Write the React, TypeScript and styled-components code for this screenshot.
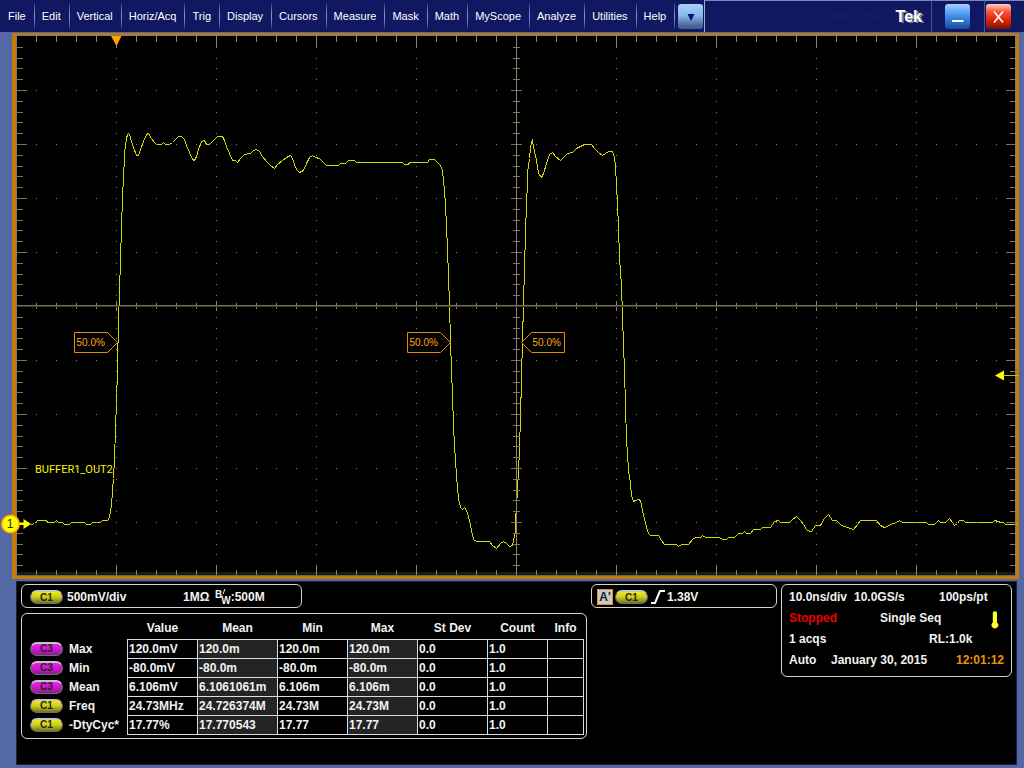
import React from "react";
import styled, { createGlobalStyle, css } from "styled-components";

const GlobalStyle = createGlobalStyle`
  *, *::before, *::after { box-sizing: border-box; }
  body {
    margin: 0;
    background: #5468a6;
    font-family: "Liberation Sans", Arial, sans-serif;
    font-size: 12px;
    line-height: 14px;
    color: #f2f2f2;
  }
  button { font: inherit; color: inherit; margin: 0; cursor: pointer; }
`;

const Page = styled.div`
  min-height: 100vh;
  display: flex;
  flex-direction: column;
`;

/* ---------- menu bar ---------- */

const MenuBar = styled.header`
  display: flex;
  height: 32px;
  background: #101862;
`;

const Menus = styled.nav`
  display: flex;
  align-items: stretch;
  padding: 3px 0 3px 1px;
`;

const MenuButton = styled.button`
  padding: 0 8px 0 7px;
  border: 0;
  border-right: 1px solid;
  border-image: linear-gradient(#2a3880, #7f9cd0, #2a3880) 1;
  background: none;
  color: #fff;
  font-size: 11px;
  line-height: 14px;
`;

const tones = {
  sky: "linear-gradient(#a9cdf8 0%, #88b8f0 45%, #4a6a98 85%, #3f5c88 100%)",
  blue: "linear-gradient(#a8d0ff 0%, #5aa0f4 35%, #3480e0 60%, #1c4a94 100%)",
  red: "linear-gradient(#ffd0c4 0%, #f8583c 30%, #e82808 60%, #781404 100%)",
};

const SquareButton = styled.button<{ $tone: keyof typeof tones }>`
  display: flex;
  align-items: center;
  justify-content: center;
  flex: none;
  width: 25px;
  height: 25px;
  padding: 0;
  border: 0;
  border-radius: 3px;
  background: ${(p) => tones[p.$tone]};
`;

const DropHolder = styled.div`
  padding: 4px 1px 0 3px;
`;

const TitleArea = styled.div`
  flex: 1;
  display: flex;
  justify-content: flex-end;
  align-items: stretch;
  border-top: 1px solid #7c86b4;
  border-left: 1px solid #a4acd0;
`;

const Model = styled.span`
  align-self: center;
  margin-right: 15px;
  color: #18225c;
`;

const Brand = styled.strong`
  align-self: center;
  margin-right: 9px;
  font-size: 16px;
  line-height: 20px;
  color: #fff;
  text-shadow: 2px 1px 0 #84848c;
`;

const WindowSlot = styled.div<{ $wide?: boolean }>`
  display: flex;
  border-left: 1px solid #46528c;
  padding: ${(p) => (p.$wide ? "3px 14px 0 13px" : "3px 13px 0 1px")};
`;

/* ---------- graticule ---------- */

const ScopeFrame = styled.main`
  margin: 1px 5px 0 12px;
  border: 3px solid #c47a08;
  border-left-width: 4px;
  background: #000;
`;

const Graticule = styled.svg`
  display: block;
  width: 100%;
  height: auto;
  overflow: visible;
`;

/* ---------- readouts ---------- */

const Readouts = styled.section`
  flex: 1;
  display: grid;
  grid-template-columns: minmax(0, 566fr) minmax(0, 186fr) minmax(0, 231fr);
  align-items: start;
  gap: 4px;
  margin: 2px 7px 3px 16px;
  padding: 2px 4px;
  border: 1px solid #1c2444;
  background: #000;
  font-weight: bold;
`;

const Column = styled.div`
  display: flex;
  flex-direction: column;
  gap: 5px;
`;

const card = css`
  border: 1px solid #d4d4d4;
  border-radius: 6px;
`;

const StripCard = styled.div<{ $half?: boolean }>`
  ${card}
  display: flex;
  align-items: center;
  height: 24px;
  padding: 2px 8px 0 ${(p) => (p.$half ? "8px" : "5px")};
  width: ${(p) => (p.$half ? "281px" : "auto")};
  max-width: 100%;
  white-space: nowrap;
`;

const Badge = styled.span<{ $kind: "C1" | "C3" }>`
  display: inline-flex;
  flex: none;
  align-items: center;
  justify-content: center;
  width: 33px;
  height: 14px;
  border: 1px solid #6c6c6c;
  border-top: 2px solid #c4c4c0;
  border-radius: 8px;
  background: ${(p) =>
    p.$kind === "C1"
      ? "linear-gradient(#eeee10, #cccc20 45%, #74741c)"
      : "linear-gradient(#f41cf4, #d018d0 45%, #8c1c8c)"};
  color: #242420;
  font-size: 10px;
  line-height: 10px;
  font-weight: bold;
`;

const Scale = styled.span`
  flex: 0 0 116px;
  margin-left: 4px;
`;

const Impedance = styled.span`
  flex: 0 0 32px;
`;

const Bandwidth = styled.span`
  display: flex;
  align-items: flex-start;
  height: 16px;
  font-size: 10px;
  line-height: 12px;
`;

const BandwidthW = styled.span`
  margin: 6px 0 0 -5px;
`;

const TriggerName = styled.span`
  flex: none;
  width: 16px;
  height: 16px;
  margin-right: 2px;
  border: 1px solid #e89018;
  background: #cacaca;
  color: #202020;
  text-align: center;
`;

const SlopeIcon = styled.svg`
  flex: none;
  width: 16px;
  height: 16px;
  margin: 0 1px 0 2px;
`;

const MeasureCard = styled.div`
  ${card}
  padding: 1px 2px 3px 0;
`;

const Table = styled.table`
  width: 100%;
  table-layout: fixed;
  border-collapse: collapse;
  white-space: nowrap;
`;

const Col = styled.col<{ $w: number }>`
  width: ${(p) => p.$w}px;
`;

const HeadCell = styled.th`
  height: 24px;
  padding: 2px 0 0;
  text-align: center;
`;

const RowHead = styled.th`
  height: 19px;
  padding: 0 0 0 8px;
  text-align: left;
`;

const RowLabel = styled.span`
  display: flex;
  align-items: center;
  gap: 6px;
`;

const Cell = styled.td<{ $shade?: boolean }>`
  padding: 0 0 0 1px;
  border: 1px solid #dcdcdc;
  background: ${(p) => (p.$shade ? "#242424" : "transparent")};
`;

const AcqCard = styled.div`
  ${card}
  display: flex;
  flex-direction: column;
  gap: 7px;
  min-height: 93px;
  padding: 5px 4px 5px 7px;
  white-space: nowrap;
`;

const AcqRow = styled.div<{ $cols: string }>`
  display: grid;
  grid-template-columns: ${(p) => p.$cols};
`;

const Tint = styled.span<{ $color: string }>`
  color: ${(p) => p.$color};
`;

const Thermometer = styled.svg`
  width: 8px;
  height: 18px;
  margin-bottom: -4px;
`;

/* ---------- data ---------- */

const menus = [
  "File", "Edit", "Vertical", "Horiz/Acq", "Trig", "Display", "Cursors",
  "Measure", "Mask", "Math", "MyScope", "Analyze", "Utilities", "Help",
];

const columns = [
  { name: "Value", w: 70 },
  { name: "Mean", w: 80, shade: true },
  { name: "Min", w: 70 },
  { name: "Max", w: 70, shade: true },
  { name: "St Dev", w: 70 },
  { name: "Count", w: 60 },
  { name: "Info", w: 36 },
];

const measurements: { ch: "C1" | "C3"; name: string; values: string[] }[] = [
  { ch: "C3", name: "Max", values: ["120.0mV", "120.0m", "120.0m", "120.0m", "0.0", "1.0", ""] },
  { ch: "C3", name: "Min", values: ["-80.0mV", "-80.0m", "-80.0m", "-80.0m", "0.0", "1.0", ""] },
  { ch: "C3", name: "Mean", values: ["6.106mV", "6.1061061m", "6.106m", "6.106m", "0.0", "1.0", ""] },
  { ch: "C1", name: "Freq", values: ["24.73MHz", "24.726374M", "24.73M", "24.73M", "0.0", "1.0", ""] },
  { ch: "C1", name: "-DtyCyc*", values: ["17.77%", "17.770543", "17.77", "17.77", "0.0", "1.0", ""] },
];

// Channel 1 samples, in the graticule's own units.
const trace =
  "31,524 34,523 37,520 46,520 47,522 54,522 56,520 58,522 62,522 64,524 69,524 71,522 84,522 86,524 90,524 92,522 100,522 102,520 107,520 " +
  "109,517 111,505 112,490 113,478 114,457 115,430 116,400 117,370 117,343 118,342 118,307 119,306 119,275 120,274 120,243 121,242 121,212 122,211 122,187 123,186 123,167 124,166 124,152 125,145 126,138 " +
  "127,134 128,133 129,134 131,141 133,147 136,155 138,155 140,149 143,141 146,134 148,133 151,138 154,142 156,144 161,144 163,142 165,144 169,144 172,142 " +
  "175,139 178,136 181,136 184,139 186,145 189,152 192,159 194,160 196,156 198,149 201,141 204,140 206,144 209,144 211,142 214,139 217,136 222,136 " +
  "224,140 226,146 229,153 232,160 235,160 237,162 240,158 244,154 250,153 253,150 256,149 259,151 262,156 266,161 270,165 274,168 277,164 282,160 " +
  "286,157 290,155 292,158 295,167 297,170 299,172 303,170 306,163 309,157 312,155 315,157 319,158 322,161 326,165 338,165 340,163 345,163 348,160 " +
  "354,160 356,162 402,162 404,164 408,164 409,162 427,162 429,159 434,159 437,162 440,165 442,170 443,180 444,190 445,205 446,225 447,250 448,275 " +
  "449,305 450,340 451,370 452,395 453,425 454,445 455,460 456,475 457,487 458,498 460,507 462,509 464,507 467,512 470,525 473,539 476,541 489,541 " +
  "492,545 496,548 500,543 503,541 506,543 509,546 512,545 513,540 515,531 515,520 516,505 517,490 518,470 519,450 520,415 521,380 521,358 522,357 " +
  "522,322 523,320 523,285 524,284 524,250 525,249 525,218 526,217 526,193 527,192 527,172 529,158 530,148 531,142 532,140 533,146 536,160 538,173 541,177 543,173 " +
  "546,163 549,154 552,152 555,156 560,160 563,157 567,153 572,152 576,148 580,146 584,144 591,144 594,148 598,152 602,155 605,153 608,151 612,151 " +
  "614,157 615,165 616,185 617,203 618,228 619,257 621,285 622,315 623,345 624,370 625,405 626,440 627,453 628,470 630,483 631,495 633,501 635,500 " +
  "638,499 640,500 642,510 645,523 648,533 650,535 658,535 661,540 664,544 676,544 678,546 681,544 688,544 692,539 695,537 700,537 702,535 705,537 " +
  "719,537 722,539 726,539 728,537 734,537 738,533 742,533 744,531 746,533 750,533 753,529 760,529 762,527 770,527 774,521 778,520 780,522 789,522 " +
  "792,519 796,516 800,520 803,524 806,529 809,531 811,531 815,525 820,525 824,518 828,514 832,520 836,520 841,525 850,528 853,529 857,524 860,520 " +
  "876,520 880,525 884,527 887,526 890,524 896,522 899,520 902,522 926,522 928,524 934,524 936,522 938,520 940,522 945,522 949,518 952,522 954,525 " +
  "957,523 959,520 963,520 965,522 992,522 994,520 998,521 1000,522 1003,522 1005,524 1016,524";

const range = (n: number) => Array.from({ length: n }, (_, i) => i);

function buildGrid() {
  let ticks = "";
  let soft = "";
  let dots = "";
  for (const i of range(51)) {
    if (i === 0 || i === 50) continue;
    const x = 16 + i * 20;
    const major = i % 5 === 0;
    ticks += `M${x} 36h1v${major ? 11 : 6}h-1z`;
    ticks += `M${x} ${major ? 565 : 570}h1V576h-1z`;
    ticks += `M${x} ${major ? 301 : 303}h1v${major ? 10 : 6}h-1z`;
    for (const r of range(9)) {
      const y = 90 + r * 54;
      if (y !== 306 && x !== 516) dots += `M${x} ${y}h1v1h-1z`;
    }
  }
  for (const j of range(50)) {
    if (j === 0) continue;
    const y = Math.round(36 + j * 10.8);
    const major = j % 5 === 0;
    const len = major ? 10 : 6;
    soft += `M17 ${y}h${len}v1h-${len}z`;
    soft += `M${1016 - len} ${y}h${len}v1h-${len}z`;
    soft += major ? `M511 ${y}h11v1h-11z` : `M513 ${y}h7v1h-7z`;
    if (!major) {
      for (const c of range(9)) {
        const x = 116 + c * 100;
        if (x !== 516) dots += `M${x} ${y}h1v1h-1z`;
      }
    }
  }
  return { ticks, soft, dots };
}

const grid = buildGrid();

/* ---------- pieces ---------- */

function LevelTag({ x, flip }: { x: number; flip?: boolean }) {
  const outline = flip
    ? `M${x} 342.5l10 -10h33v20h-33z`
    : `M${x} 342.5l-10 -10h-33v20h33z`;
  return (
    <g>
      <path d={outline} fill="#000" stroke="#e89000" />
      <text x={flip ? x + 11 : x - 41} y={346} fontSize="10" fill="#f8a818">
        50.0%
      </text>
    </g>
  );
}

function Display() {
  return (
    <ScopeFrame>
      <Graticule viewBox="16 36 1000 540" role="img" aria-label="Channel 1 waveform">
        <rect x="16" y="572" width="1000" height="3" fill="#1c1a14" />
        <polyline
          points={trace}
          transform="translate(.5 .5)"
          fill="none"
          stroke="#d8d800"
          shapeRendering="crispEdges"
        />
        <path d={grid.dots} fill="#88826e" />
        <path d={grid.soft} fill="#7c745e" />
        <path d={grid.ticks} fill="#8f856c" />
        <path d="M516.5 36V576" stroke="#8f856c" />
        <path d="M16 305.5H1016" stroke="#7c735e" />
        <path d="M16 306.5H1016" stroke="#38342a" />
        <path d="M16.5 575.5V36M16 35.5H1016M1015.5 36V576" fill="none" stroke="#857a62" />
        <path d="M16 575.5H1016" stroke="#6e6450" />

        <path d="M111 36h10.500l-5 10z" fill="#ffa400" />
        <LevelTag x={117.5} />
        <LevelTag x={450.5} />
        <LevelTag x={521.5} flip />
        <text
          x="35"
          y="473"
          fontSize="11"
          fill="#f4f400"
          fontFamily="Roboto, 'Liberation Sans', sans-serif"
        >
          BUFFER1_OUT2
        </text>

        <path d="M995 375.500l9 -5v10z" fill="#ffff00" />
        <path d="M1003 375.500H1019" stroke="#c8c000" />

        <path d="M19 524H25" stroke="#ffff00" strokeWidth="2" />
        <path d="M23.500 519l7.500 5l-7.500 5z" fill="#ffff00" />
        <circle cx="10.500" cy="524" r="8.800" fill="#ffff00" stroke="#ffa400" strokeWidth="1.600" />
        <text x="10" y="528" fontSize="12" textAnchor="middle" fill="#303000">
          1
        </text>
      </Graticule>
    </ScopeFrame>
  );
}

export default function App() {
  return (
    <Page>
      <GlobalStyle />
      <MenuBar>
        <Menus aria-label="Main menu">
          {menus.map((m) => (
            <MenuButton key={m} type="button">
              {m}
            </MenuButton>
          ))}
        </Menus>
        <DropHolder>
          <SquareButton $tone="sky" type="button" aria-label="More menus">
            <svg width="8" height="8" viewBox="0 0 8 8">
              <path d="M.5 1h7L4 8z" fill="#0a0a80" />
            </svg>
          </SquareButton>
        </DropHolder>
        <TitleArea>
          <Model>DPO7254</Model>
          <Brand>Tek</Brand>
          <WindowSlot $wide>
            <SquareButton $tone="blue" type="button" aria-label="Minimize">
              <svg width="13" height="14" viewBox="0 0 13 14">
                <path d="M1 11h11.500" stroke="#fff" strokeWidth="2" />
              </svg>
            </SquareButton>
          </WindowSlot>
          <WindowSlot>
            <SquareButton $tone="red" type="button" aria-label="Close">
              <svg width="11" height="12" viewBox="0 0 11 12">
                <path d="M1 .5L10 11.500M10 .5L1 11.500" stroke="#fff" strokeWidth="1.600" />
              </svg>
            </SquareButton>
          </WindowSlot>
        </TitleArea>
      </MenuBar>

      <Display />

      <Readouts>
        <Column>
          <StripCard $half>
            <Badge $kind="C1">C1</Badge>
            <Scale>500mV/div</Scale>
            <Impedance>1MΩ</Impedance>
            <Bandwidth>
              <span>B</span>
              <svg width="4" height="6" viewBox="0 0 4 6">
                <path d="M3 0L1 5" stroke="#f2f2f2" />
              </svg>
              <BandwidthW>W</BandwidthW>
            </Bandwidth>
            <span>:500M</span>
          </StripCard>
          <MeasureCard>
            <Table>
              <colgroup>
                <col />
                {columns.map((c) => (
                  <Col key={c.name} $w={c.w} />
                ))}
              </colgroup>
              <thead>
                <tr>
                  <td />
                  {columns.map((c) => (
                    <HeadCell key={c.name} scope="col">
                      {c.name}
                    </HeadCell>
                  ))}
                </tr>
              </thead>
              <tbody>
                {measurements.map((m) => (
                  <tr key={m.name}>
                    <RowHead scope="row">
                      <RowLabel>
                        <Badge $kind={m.ch}>{m.ch}</Badge>
                        {m.name}
                      </RowLabel>
                    </RowHead>
                    {m.values.map((v, i) => (
                      <Cell key={columns[i].name} $shade={columns[i].shade}>
                        {v}
                      </Cell>
                    ))}
                  </tr>
                ))}
              </tbody>
            </Table>
          </MeasureCard>
        </Column>

        <StripCard>
          <TriggerName>A'</TriggerName>
          <Badge $kind="C1">C1</Badge>
          <SlopeIcon viewBox="0 0 16 16">
            <path d="M1 14H5L10 2H15" fill="none" stroke="#fff" strokeWidth="2" />
          </SlopeIcon>
          <span>1.38V</span>
        </StripCard>

        <AcqCard>
          <AcqRow $cols="65px 85px 1fr">
            <span>10.0ns/div</span>
            <span>10.0GS/s</span>
            <span>100ps/pt</span>
          </AcqRow>
          <AcqRow $cols="91px 111px 1fr">
            <Tint $color="#ee0000">Stopped</Tint>
            <span>Single Seq</span>
            <Thermometer viewBox="0 0 8 18">
              <path d="M1.800 1.500Q4 -.8 6 1.500V11.500A3.300 3.300 0 1 1 1.800 11.500Z" fill="#ffff30" />
            </Thermometer>
          </AcqRow>
          <AcqRow $cols="140px 1fr">
            <span>1 acqs</span>
            <span>RL:1.0k</span>
          </AcqRow>
          <AcqRow $cols="42px 125px 1fr">
            <span>Auto</span>
            <span>January 30, 2015</span>
            <Tint $color="#f09000">12:01:12</Tint>
          </AcqRow>
        </AcqCard>
      </Readouts>
    </Page>
  );
}
